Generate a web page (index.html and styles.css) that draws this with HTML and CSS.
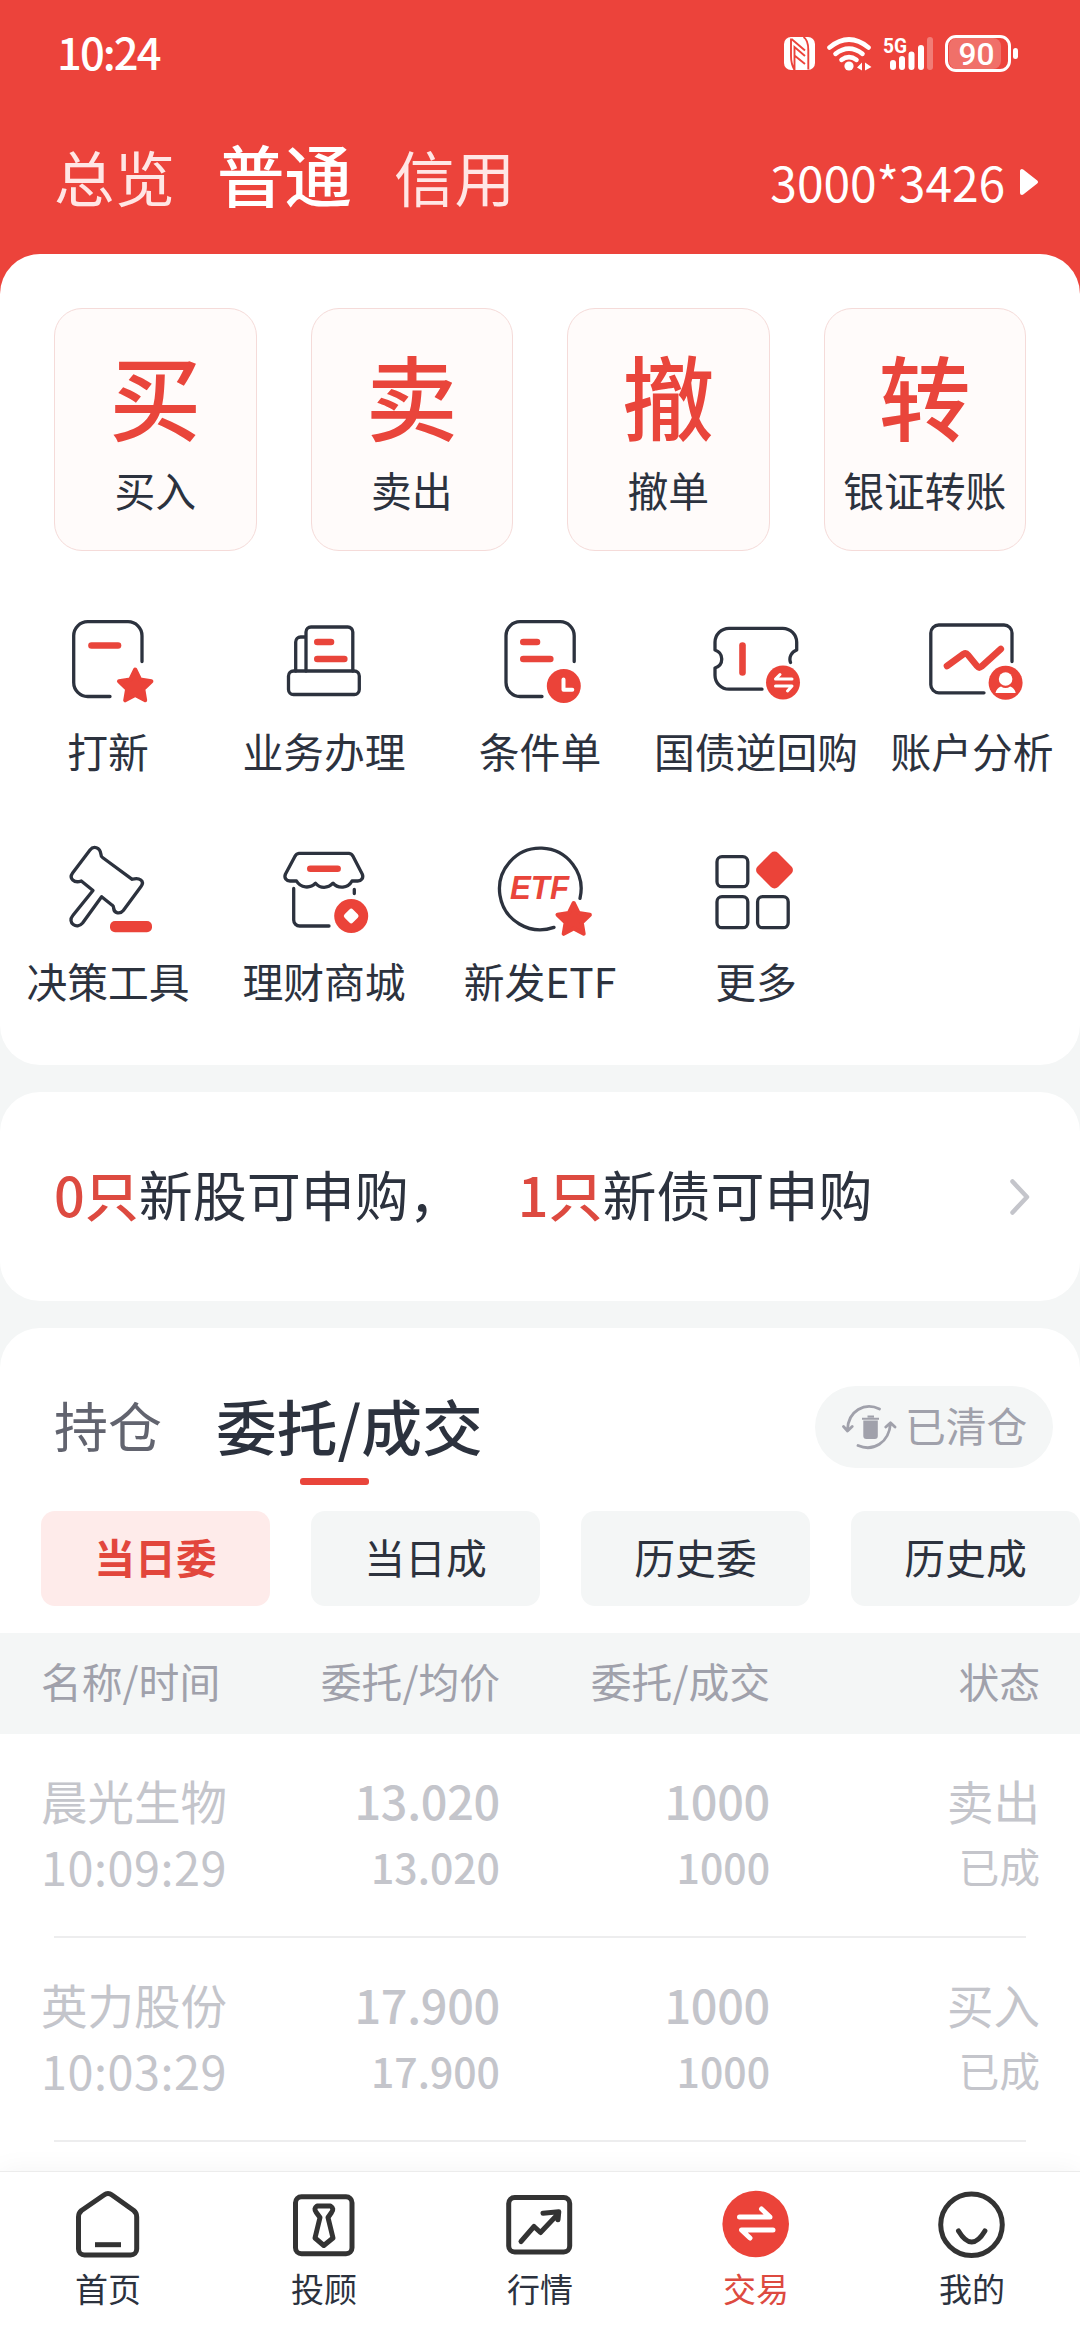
FILE: index.html
```html
<!DOCTYPE html>
<html lang="zh-CN">
<head>
<meta charset="utf-8">
<title>交易</title>
<link rel="stylesheet" href="styles.css">
</head>
<body>
<header class="top">
  <div class="status">
    <span class="clock">10:24</span>
    <svg class="status-icons" width="240" height="44" viewBox="0 0 240 44">
      <rect x="4" y="5" width="31" height="33" rx="7" fill="#fff"/>
      <path d="M11 6.500V24Q11 32 14.500 38V15L25 24M11.500 7L25 18.500M14.500 23.500L25 32M23.500 5Q28.300 8 28.300 18V37.500" fill="none" stroke="#ec433b" stroke-width="1.900"/>
      <g fill="none" stroke="#fff" stroke-width="4.600" stroke-linecap="round">
        <path d="M49.500 15.500Q69 -0.500 88.500 15.500"/>
        <path d="M55.500 21.800Q69 11.500 82.500 21.800"/>
        <path d="M61.500 27.800Q69 22.500 76.500 27.800"/>
      </g>
      <circle cx="69" cy="34" r="4.600" fill="#fff"/>
      <path d="M77 35.500l5-5v8zM85 30.500l6.500 4.500-6.500 3.500z" fill="#fff"/>
      <text class="net" x="103" y="21" textLength="24" lengthAdjust="spacingAndGlyphs">5G</text>
      <g stroke="#fff" stroke-width="6" stroke-linecap="round">
        <path d="M113 31v4M122 27v8M131.500 22.500v12.500M141 16v19"/>
        <path d="M150 8v27" opacity=".3"/>
      </g>
      <rect x="169" y="6" width="52" height="31" rx="8" fill="#fff" opacity=".24"/>
      <rect x="166.500" y="4.500" width="63" height="34" rx="9.500" fill="none" stroke="#fff" stroke-width="3"/>
      <rect x="233" y="16" width="5" height="11" rx="2.500" fill="#fff"/>
      <text class="batt" x="178.500" y="32.500" textLength="36" lengthAdjust="spacingAndGlyphs">90</text>
    </svg>
  </div>
  <div class="account">
    <span class="acc-tab">总览</span>
    <span class="acc-tab on">普通</span>
    <span class="acc-tab">信用</span>
    <span class="acc-no">3000*3426</span>
    <svg class="acc-arrow" width="20" height="30" viewBox="0 0 20 30"><path d="M3 4v22L17 15z" fill="#fff" stroke="#fff" stroke-width="4" stroke-linejoin="round"/></svg>
  </div>
</header>

<main>
  <section class="card main-card">
    <div class="actions">
      <div class="action"><span class="big">买</span><span class="label">买入</span></div>
      <div class="action"><span class="big">卖</span><span class="label">卖出</span></div>
      <div class="action"><span class="big">撤</span><span class="label">撤单</span></div>
      <div class="action"><span class="big">转</span><span class="label">银证转账</span></div>
    </div>
    <div class="tools">
      <div class="tool">
        <svg class="icon" viewBox="0 0 108 108">
          <path class="ln" d="M88 55.500V29.700a14 14 0 0 0-14-14H33.700a14 14 0 0 0-14 14v46.800a14 14 0 0 0 14 14H56"/>
          <path class="rd" d="M37.500 39.500H64"/>
          <path class="star" d="M81.200 63.500l5 10.100 11.200 1.600-8.100 7.900 1.900 11.200-10-5.300-10 5.300 1.900-11.200-8.100-7.900 11.200-1.600z"/>
        </svg>
        <span class="label">打新</span>
      </div>
      <div class="tool">
        <svg class="icon" viewBox="0 0 108 108">
          <path class="ln" d="M36 65V26a5 5 0 0 1 5-5h36.800a5 5 0 0 1 5 5v39M25.700 65V36a5 5 0 0 1 5-5H36"/>
          <rect class="ln" x="18.500" y="65" width="70.800" height="23.500" rx="5"/>
          <path class="rd" d="M47.300 36H61M47.300 53h27"/>
        </svg>
        <span class="label">业务办理</span>
      </div>
      <div class="tool">
        <svg class="icon" viewBox="0 0 108 108">
          <path class="ln" d="M88.200 55.500V29.700a14 14 0 0 0-14-14H34a14 14 0 0 0-14 14v46.800a14 14 0 0 0 14 14h22"/>
          <path class="rd" d="M37.300 36H51M37.300 53h27"/>
          <circle class="fill" cx="77.800" cy="80" r="17"/>
          <path class="wt" d="M77.500 73.500v10.200h8.800"/>
        </svg>
        <span class="label">条件单</span>
      </div>
      <div class="tool">
        <svg class="icon" viewBox="0 0 108 108">
          <path class="ln" d="M60 83.200H27a14 14 0 0 1-14-14V62c9-3 9-15 0-18v-7.700a14 14 0 0 1 14-14h53.700a14 14 0 0 1 14 14V44c-5.500 2-8 7.500-6.200 12.500"/>
          <path class="rd" d="M40.500 39.500v27"/>
          <circle class="fill" cx="81" cy="76.500" r="17"/>
          <path class="wt thin" d="M90 73H73.500l4.500-4.500M73.500 80H90l-4.500 5"/>
        </svg>
        <span class="label">国债逆回购</span>
      </div>
      <div class="tool">
        <svg class="icon" viewBox="0 0 108 108">
          <path class="ln" d="M94 55.500V27a8 8 0 0 0-8-8H20.800a8 8 0 0 0-8 8v51.800a8 8 0 0 0 8 8H66"/>
          <path class="rd" d="M29 60l16.500-12q2.500-1.500 4.500 1l9 11q2 2.500 4.500.5L82.800 43"/>
          <circle class="fill" cx="87.600" cy="76.700" r="17"/>
          <circle cx="87.600" cy="73" r="6.800" fill="#fff"/>
          <path d="M77.500 87q1-5 5.500-6.500 4.600 3 9.200 0 4.500 1.500 5.500 6.500z" fill="#fff"/>
        </svg>
        <span class="label">账户分析</span>
      </div>
      <div class="tool">
        <svg class="icon" viewBox="0 0 108 108">
          <path class="ln" d="M36 14L18.600 37c-4 5.500 1.500 10.500 8.700 8L39 54.500 18.800 79.500c-6 7 4 14.500 9.800 7.500L47.600 60.700l10.600 8.500q1.400 1 1.400 2.800c.5 5.500 6.500 6.500 9.700 2.500L87 50.500c4-5.500-1.500-9.500-8.800-7.200L48.500 21.500q-1.500-1-1.500-3C46 11 39.500 9.500 36 14z"/>
          <rect class="fill" x="56" y="85" width="42" height="11.300" rx="5"/>
        </svg>
        <span class="label">决策工具</span>
      </div>
      <div class="tool">
        <svg class="icon" viewBox="0 0 108 108">
          <path class="ln" d="M29 17.300h50a5 5 0 0 1 4 3L92.200 38c1.800 4-1 7-4.500 7H82c-4 7.500-14 8-19 2.200-5 5.500-13 5.500-17.500 0C40 53 30.500 52 26.500 45H20c-3.500 0-6.300-3-4.500-7L25 20.300a5 5 0 0 1 4-3zM23.700 52.500V84a6 6 0 0 0 6 6H59M84.300 53.500v4"/>
          <path class="rd" d="M40.300 32.700h27.300"/>
          <circle class="fill" cx="81.200" cy="80" r="17"/>
          <rect x="75.300" y="74.100" width="11.800" height="11.800" rx="2.500" fill="#fff" transform="rotate(45 81.200 80)"/>
        </svg>
        <span class="label">理财商城</span>
      </div>
      <div class="tool">
        <svg class="icon" viewBox="0 0 108 108">
          <path class="ln" d="M68 91.400A40.800 40.800 0 1 1 94 62.300"/>
          <text class="etf" x="24" y="63.200" textLength="59" lengthAdjust="spacingAndGlyphs">ETF</text>
          <path class="star" transform="translate(6.500 3.500)" d="M81.200 63.500l5 10.100 11.200 1.600-8.100 7.900 1.900 11.200-10-5.300-10 5.300 1.900-11.200-8.100-7.900 11.200-1.600z"/>
        </svg>
        <span class="label">新发ETF</span>
      </div>
      <div class="tool">
        <svg class="icon" viewBox="0 0 108 108">
          <rect class="ln" x="15" y="20.700" width="30.800" height="30" rx="5"/>
          <rect class="ln" x="15" y="60.700" width="30.800" height="31" rx="5"/>
          <rect class="ln" x="55.600" y="60.700" width="30.600" height="31" rx="5"/>
          <rect class="fill" x="58" y="19.500" width="29" height="29" rx="5" transform="rotate(45 72.500 34)"/>
        </svg>
        <span class="label">更多</span>
      </div>
    </div>
  </section>

  <section class="card ipo">
    <span class="ipo-item"><b>0只</b>新股可申购，</span>
    <span class="ipo-item"><b>1只</b>新债可申购</span>
    <svg class="chev" width="28" height="42" viewBox="0 0 28 42"><path d="M6.500 5.500L21 21 6.500 36.500" fill="none" stroke="#c4c5cb" stroke-width="4.500" stroke-linecap="round" stroke-linejoin="round"/></svg>
  </section>

  <section class="card orders">
    <div class="order-tabs">
      <span class="o-tab">持仓</span>
      <span class="o-tab on">委托/成交</span>
      <span class="cleared">
        <svg width="55" height="48" viewBox="0 0 55 48" fill="none" stroke="#a0a1ab" stroke-width="2.800" stroke-linecap="round" stroke-linejoin="round">
          <path d="M37.500 6C23-1 6 7.500 5.500 27M1.500 23.500l4 4.500 4.700-4.500M16 42.500C31 49 47 40 48.500 20.500M43.800 24l4.700-4.300 4.500 4.300"/>
          <path d="M20 14.800h17v2H20zM25.500 12.500h6.500v2h-6.500z" fill="#a0a1ab" stroke="none"/>
          <path d="M21.300 17.500h14.500V33a3 3 0 0 1-3 3h-8.500a3 3 0 0 1-3-3z" fill="#a0a1ab" stroke="none"/>
        </svg>
        <span>已清仓</span>
      </span>
    </div>
    <div class="chips">
      <span class="chip on">当日委</span>
      <span class="chip">当日成</span>
      <span class="chip">历史委</span>
      <span class="chip">历史成</span>
    </div>
    <div class="row head">
      <span>名称/时间</span><span>委托/均价</span><span>委托/成交</span><span>状态</span>
    </div>
    <div class="row item">
      <span class="name">晨光生物</span><span class="n1">13.020</span><span class="n1">1000</span><span class="name">卖出</span>
      <span class="time">10:09:29</span><span class="n2">13.020</span><span class="n2">1000</span><span class="st">已成</span>
    </div>
    <div class="row item">
      <span class="name">英力股份</span><span class="n1">17.900</span><span class="n1">1000</span><span class="name">买入</span>
      <span class="time">10:03:29</span><span class="n2">17.900</span><span class="n2">1000</span><span class="st">已成</span>
    </div>
  </section>
</main>

<nav class="nav">
  <div class="nav-item">
    <svg class="nav-icon" viewBox="0 0 72 72"><path d="M6.500 29q0-4 3-6.500L32 7q4-3 8 0l21.700 15.500q3 2.500 3 6.500v32a6 6 0 0 1-6 6H12.500a6 6 0 0 1-6-6z"/><path d="M23 56.700H49" stroke-linecap="butt"/></svg>
    <span>首页</span>
  </div>
  <div class="nav-item">
    <svg class="nav-icon" viewBox="0 0 72 72"><rect x="7.500" y="8.700" width="56.500" height="57" rx="6"/><path d="M29 18h13.500q4 2.500 1 6.500l-3.500 5 5 20.500-9.200 7.500L27 50l5-20.500-3.700-5q-3-4 .7-6.500z"/></svg>
    <span>投顾</span>
  </div>
  <div class="nav-item">
    <svg class="nav-icon" viewBox="0 0 72 72"><rect x="4.700" y="9.500" width="61" height="54.500" rx="6"/><path d="M17 53.500L30 38.500l6.500 6L54 26M39 25.200l15.800-1.500-.8 8"/></svg>
    <span>行情</span>
  </div>
  <div class="nav-item on">
    <svg class="nav-icon" viewBox="0 0 72 72"><circle class="disc" cx="35.700" cy="36" r="33.300"/><path class="arr" d="M19.500 29H50l-8.500-8M53 42H21.500l8.500 8"/></svg>
    <span>交易</span>
  </div>
  <div class="nav-item">
    <svg class="nav-icon" viewBox="0 0 72 72"><circle cx="35.500" cy="36.800" r="30.800"/><path d="M22.500 43q13.200 22 26.400 0"/></svg>
    <span>我的</span>
  </div>
</nav>
</body>
</html>
```

FILE: styles.css
```css
* { box-sizing: border-box; }

body {
  margin: 0;
  width: 1080px;
  height: 2340px;
  overflow: hidden;
  display: flex;
  flex-direction: column;
  background: #f4f6f6;
  color: #2c323e;
  font-family: "Noto Sans CJK SC", "Noto Sans", sans-serif;
}

svg { display: block; flex: none; }

.top {
  flex: none;
  height: 304px;
  margin-bottom: -50px;
  background: #ec433b;
  color: #fff;
}

.status {
  height: 108px;
  padding: 0 60px 0 57px;
  display: flex;
  align-items: center;
  justify-content: space-between;
}

.clock {
  font-size: 43.500px;
  font-weight: 500;
  line-height: 50px;
  margin-bottom: 4px;
  letter-spacing: -1.900px;
}

.net { font: 700 21px Roboto, sans-serif; fill: #fff; }
.batt { font: 500 32px Roboto, sans-serif; fill: #fff; }

.account {
  display: flex;
  align-items: baseline;
  padding: 32px 41px 0 54px;
}

.acc-tab {
  font-size: 60.500px;
  line-height: 66px;
  color: #ffe6e5;
  margin-right: 42px;
}

.acc-tab.on { font-size: 67.500px; font-weight: 500; color: #fff; }

.acc-no {
  margin-left: auto;
  font-size: 48px;
  line-height: 60px;
  letter-spacing: -0.1px;
}

.acc-arrow { margin-left: 14px; align-self: flex-start; margin-top: 27px; }

main { flex: 1; min-height: 0; display: flex; flex-direction: column; gap: 27px; }

.card { background: #fff; border-radius: 40px; flex: none; }

.main-card { height: 811px; padding-top: 54px; }

.actions { display: flex; gap: 54px; padding: 0 54px; }

.action {
  flex: 1;
  height: 243px;
  padding-top: 39px;
  border: 1px solid #f5dbd9;
  border-radius: 28px;
  background: #fffbfa;
  display: flex;
  flex-direction: column;
  align-items: center;
  gap: 26px;
}

.big { font-size: 92px; line-height: 92px; font-weight: 500; color: #e9453b; }

.label { font-size: 40.800px; line-height: 48px; white-space: nowrap; }

.tools {
  display: grid;
  grid-template-columns: repeat(5, 216px);
  row-gap: 62px;
  margin-top: 55px;
}

.tool { display: flex; flex-direction: column; align-items: center; gap: 13px; }
.tool .label { margin-bottom: -1px; }

.icon { width: 108px; height: 108px; }
.ln { fill: none; stroke: #2c323e; stroke-width: 3.300; stroke-linecap: round; stroke-linejoin: round; }
.rd { fill: none; stroke: #e9453b; stroke-width: 6.600; stroke-linecap: round; stroke-linejoin: round; }
.wt { fill: none; stroke: #fff; stroke-width: 4; stroke-linecap: round; stroke-linejoin: round; }
.wt.thin { stroke-width: 3; }
.fill { fill: #eb4339; }
.star { fill: #eb4339; stroke: #eb4339; stroke-width: 4; stroke-linejoin: round; }
.etf { font: italic 700 33.500px "Liberation Sans", sans-serif; fill: #e9453b; }

.ipo {
  height: 209px;
  padding: 0 46px 0 54px;
  display: flex;
  align-items: center;
}

.ipo-item { font-size: 54px; line-height: 64px; padding-bottom: 5px; margin-right: 55px; white-space: nowrap; }
.ipo-item b { font-weight: 500; color: #dd4a40; }
.chev { margin-left: auto; }

.orders { flex: 1; border-radius: 40px 40px 0 0; padding-top: 58px; }

.order-tabs {
  height: 82px;
  padding: 0 27px 0 54px;
  display: flex;
  align-items: center;
}

.o-tab { font-size: 54px; line-height: 60px; margin-bottom: 5px; color: #62646f; }

.o-tab.on {
  position: relative;
  margin-left: 54px;
  font-size: 60.800px;
  font-weight: 500;
  color: #2c323e;
}

.o-tab.on::after {
  content: "";
  position: absolute;
  left: 84px;
  bottom: -30px;
  width: 69px;
  height: 7px;
  border-radius: 3px;
  background: #e9453b;
}

.cleared {
  margin-left: auto;
  width: 238px;
  height: 82px;
  padding-left: 27px;
  border-radius: 41px;
  background: #f4f6f6;
  color: #a0a1ab;
  font-size: 40.800px;
  line-height: 48px;
  display: flex;
  align-items: center;
  gap: 8px;
}

.cleared span { margin-bottom: 4px; }

.chips { display: flex; gap: 41px; padding-left: 41px; margin: 43px 0 27px; }

.chip {
  flex: none;
  width: 229px;
  height: 95px;
  border-radius: 14px;
  background: #f4f6f6;
  text-align: center;
  font-size: 40.800px;
  line-height: 92px;
}

.chip.on { background: #feebea; color: #e2463c; font-weight: 700; }

.row {
  display: grid;
  grid-template-columns: 189px 270px 270px 270px;
  padding-left: 41px;
  white-space: nowrap;
}

.row > :not(:nth-child(4n + 1)) { text-align: right; }

.head {
  height: 101px;
  line-height: 96px;
  font-size: 40.800px;
  background: #f4f6f6;
  color: #a0a1ab;
}

.item {
  position: relative;
  height: 204px;
  padding-top: 34px;
  grid-template-rows: 66px 66px;
  line-height: 64px;
  color: #c4c5cb;
}

.item::after {
  content: "";
  position: absolute;
  left: 54px;
  right: 54px;
  bottom: 0;
  height: 2px;
  background: #ededee;
}

.name { font-size: 46.500px; }
.n1 { font-size: 46.800px; font-weight: 500; letter-spacing: -0.3px; }
.time { font-size: 46.800px; letter-spacing: 0.5px; }
.n2 { font-size: 41px; font-weight: 500; }
.st { font-size: 40.800px; }

.nav {
  flex: none;
  position: relative;
  height: 169px;
  padding-top: 16px;
  display: grid;
  grid-template-columns: repeat(5, 1fr);
  background: #fff;
  border-top: 1px solid #ececec;
  box-shadow: 0 0 26px rgba(0, 0, 0, .05);
}

.nav-item {
  display: flex;
  flex-direction: column;
  align-items: center;
  gap: 8px;
  font-size: 33px;
  line-height: 40px;
}

.nav-item.on { color: #dd4a40; }
.nav-icon { width: 72px; height: 72px; fill: none; stroke: #333; stroke-width: 5; stroke-linecap: round; stroke-linejoin: round; }
.nav-icon .disc { fill: #eb4339; stroke: none; }
.nav-icon .arr { stroke: #fff; }
```
